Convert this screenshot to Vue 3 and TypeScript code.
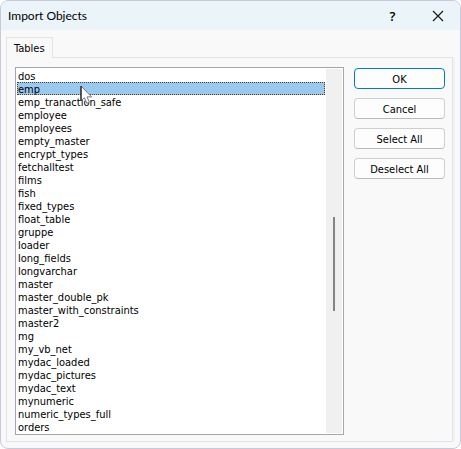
<script setup lang="ts">
import { ref } from 'vue'

const tables: string[] = [
  'dos', 'emp', 'emp_tranaction_safe', 'employee', 'employees', 'empty_master',
  'encrypt_types', 'fetchalltest', 'films', 'fish', 'fixed_types', 'float_table',
  'gruppe', 'loader', 'long_fields', 'longvarchar', 'master', 'master_double_pk',
  'master_with_constraints', 'master2', 'mg', 'my_vb_net', 'mydac_loaded',
  'mydac_pictures', 'mydac_text', 'mynumeric', 'numeric_types_full', 'orders',
]

const selected = ref<string[]>(['emp'])
const focused = ref('emp')

function pick(name: string) {
  selected.value = [name]
  focused.value = name
}
function selectAll() {
  selected.value = [...tables]
}
function deselectAll() {
  selected.value = []
}
</script>

<template>
  <div class="dialog" role="dialog" aria-labelledby="dialog-title">
    <header class="titlebar">
      <h1 id="dialog-title" class="title">Import Objects</h1>
      <button class="caption help" type="button" aria-label="Help">?</button>
      <button class="caption" type="button" aria-label="Close">
        <svg width="12" height="12" viewBox="0 0 12 12" aria-hidden="true">
          <path d="M1 1L11 11M11 1L1 11" fill="none" stroke="#1a1a1a" stroke-width="1.2" />
        </svg>
      </button>
    </header>
    <main class="body">
      <div class="tabs" role="tablist">
        <button id="tab-tables" class="tab" type="button" role="tab" aria-selected="true">Tables</button>
      </div>
      <section class="panel" role="tabpanel" aria-labelledby="tab-tables">
        <div class="listbox">
          <ul class="items" role="listbox" aria-multiselectable="true" aria-labelledby="tab-tables">
            <li
              v-for="name in tables"
              :key="name"
              class="item"
              :class="{ selected: selected.includes(name), focused: focused === name }"
              role="option"
              :aria-selected="selected.includes(name)"
              @click="pick(name)"
            >
              {{ name }}
              <svg v-if="name === 'emp'" class="pointer" width="13" height="20" viewBox="0 0 13 20" aria-hidden="true">
                <path d="M1 1V16L4.4 12.8L6.8 18.3L9.4 17.2L7 11.9H11.6Z" fill="#fff" stroke="#77777f" stroke-width="1" />
                <path d="M1 1V16" stroke="#16161c" stroke-width="1.2" />
              </svg>
            </li>
          </ul>
          <div class="scrollbar"><div class="thumb"></div></div>
        </div>
        <div class="actions">
          <button class="action primary" type="button">OK</button>
          <button class="action" type="button">Cancel</button>
          <button class="action" type="button" @click="selectAll">Select All</button>
          <button class="action" type="button" @click="deselectAll">Deselect All</button>
        </div>
      </section>
    </main>
  </div>
</template>

<style>
body {
  margin: 0;
  background: #fff;
}
</style>

<style scoped>
.dialog {
  box-sizing: border-box;
  border: 1px solid #c9c9dc;
  border-radius: 8px;
  overflow: hidden;
  background: #f9f9f9;
  color: #000;
  font: 11px/13px "DejaVu Sans Condensed", "DejaVu Sans", sans-serif;
}
button {
  font: inherit;
  color: inherit;
  margin: 0;
  padding: 0;
}
.titlebar {
  display: flex;
  align-items: center;
  height: 29px;
  padding-left: 7px;
  background: #ebf4f8;
}
.title {
  flex: 1;
  margin: 0;
  font: 12px/16px Lato, "Open Sans", sans-serif;
}
.caption {
  display: flex;
  align-items: center;
  justify-content: center;
  width: 45px;
  height: 28px;
  border: 0;
  background: none;
}
.help {
  font: 600 13px/16px "Open Sans", sans-serif;
}
.body {
  padding: 7px 7px 6px 5px;
}
.tabs {
  display: flex;
}
.tab {
  position: relative;
  z-index: 1;
  height: 21px;
  margin-bottom: -1px;
  padding: 0 7px;
  border: 1px solid #e3e3e3;
  border-bottom: 0;
  background: #f9f9f9;
}
.panel {
  display: flex;
  align-items: flex-start;
  gap: 10px;
  padding: 9px 7px 6px 8px;
  border: 1px solid #e3e3e3;
  box-shadow: 2px 0 0 #f3f3f3;
}
.listbox {
  flex: 1;
  display: flex;
  padding: 1px;
  border: 1px solid #a3a6aa;
  background: #fff;
}
.items {
  flex: 1;
  margin: 0;
  padding: 0;
  list-style: none;
}
.item {
  position: relative;
  box-sizing: border-box;
  height: 13px;
  padding-left: 1px;
  line-height: 15px;
  white-space: nowrap;
  cursor: default;
}
.selected {
  background: #99c9ef;
}
.focused {
  outline: 1px dotted #5c3a1c;
  outline-offset: -1px;
}
.pointer {
  position: absolute;
  left: 63px;
  top: 3px;
  z-index: 2;
}
.scrollbar {
  display: flex;
  justify-content: center;
  align-items: flex-start;
  width: 16px;
  margin-left: 1px;
  background: #f0f0f0;
}
.thumb {
  width: 2px;
  height: 94px;
  margin-top: 148px;
  background: #858585;
}
.actions {
  display: flex;
  flex-direction: column;
  gap: 9px;
  width: 91px;
  padding-top: 1px;
}
.action {
  height: 21px;
  padding-top: 2px;
  border: 1px solid #cfcfcf;
  border-bottom-color: #bababa;
  border-radius: 4px;
  background: #fdfdfd;
}
.primary {
  border-color: #0078d4;
}
</style>
